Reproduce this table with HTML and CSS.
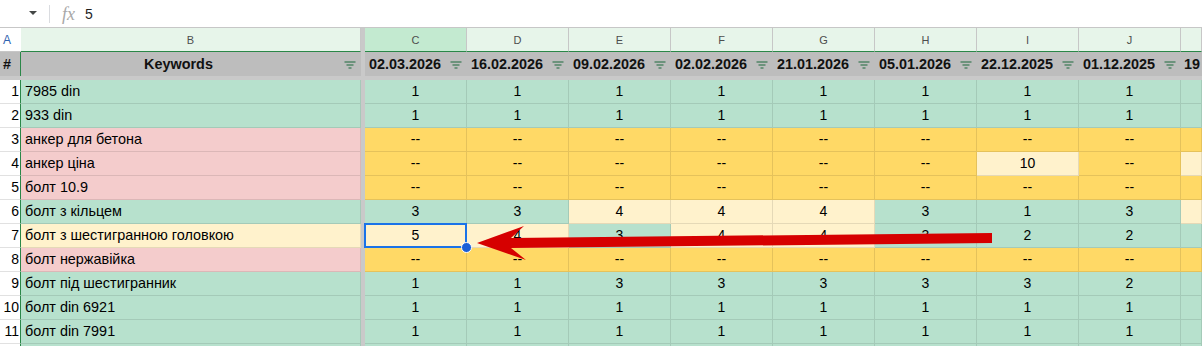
FILE: index.html
```html
<!DOCTYPE html>
<html lang="uk">
<head>
<meta charset="utf-8">
<title>Sheet</title>
<link rel="stylesheet" href="styles.css">
</head>
<body>
<div class="page">
  <div class="topbar">
    <span class="namebox-caret"></span>
    <span class="tb-sep"></span>
    <span class="fx">fx</span>
    <span class="formula">5</span>
  </div>

  <div class="row colheads">
    <div class="ch ch-a">A</div>
    <div class="ch">B</div>
    <div class="div-v"></div>
    <div class="ch ch-sel">C</div>
    <div class="ch">D</div>
    <div class="ch">E</div>
    <div class="ch">F</div>
    <div class="ch">G</div>
    <div class="ch">H</div>
    <div class="ch">I</div>
    <div class="ch">J</div>
    <div class="ch"></div>
  </div>

  <div class="row headrow">
    <div class="hd hd-a">#</div>
    <div class="hd hd-kw"><span class="hd-text">Keywords</span><svg class="filt" viewBox="0 0 12 8"><path d="M0.5 1h11M2.5 4h7M4.5 7h3"/></svg></div>
    <div class="div-v"></div>
    <div class="hd"><span class="hd-text">02.03.2026</span><svg class="filt" viewBox="0 0 12 8"><path d="M0.5 1h11M2.5 4h7M4.5 7h3"/></svg></div>
    <div class="hd"><span class="hd-text">16.02.2026</span><svg class="filt" viewBox="0 0 12 8"><path d="M0.5 1h11M2.5 4h7M4.5 7h3"/></svg></div>
    <div class="hd"><span class="hd-text">09.02.2026</span><svg class="filt" viewBox="0 0 12 8"><path d="M0.5 1h11M2.5 4h7M4.5 7h3"/></svg></div>
    <div class="hd"><span class="hd-text">02.02.2026</span><svg class="filt" viewBox="0 0 12 8"><path d="M0.5 1h11M2.5 4h7M4.5 7h3"/></svg></div>
    <div class="hd"><span class="hd-text">21.01.2026</span><svg class="filt" viewBox="0 0 12 8"><path d="M0.5 1h11M2.5 4h7M4.5 7h3"/></svg></div>
    <div class="hd"><span class="hd-text">05.01.2026</span><svg class="filt" viewBox="0 0 12 8"><path d="M0.5 1h11M2.5 4h7M4.5 7h3"/></svg></div>
    <div class="hd"><span class="hd-text">22.12.2025</span><svg class="filt" viewBox="0 0 12 8"><path d="M0.5 1h11M2.5 4h7M4.5 7h3"/></svg></div>
    <div class="hd"><span class="hd-text">01.12.2025</span><svg class="filt" viewBox="0 0 12 8"><path d="M0.5 1h11M2.5 4h7M4.5 7h3"/></svg></div>
    <div class="hd hd-k"><span class="hd-text">19</span></div>
  </div>

  <div class="div-h"></div>

  <div class="row">
    <div class="num">1</div><div class="kw g">7985 din</div><div class="div-v"></div>
    <div class="c g">1</div><div class="c g">1</div><div class="c g">1</div><div class="c g">1</div><div class="c g">1</div><div class="c g">1</div><div class="c g">1</div><div class="c g">1</div><div class="c g"></div>
  </div>
  <div class="row">
    <div class="num">2</div><div class="kw g">933 din</div><div class="div-v"></div>
    <div class="c g">1</div><div class="c g">1</div><div class="c g">1</div><div class="c g">1</div><div class="c g">1</div><div class="c g">1</div><div class="c g">1</div><div class="c g">1</div><div class="c g"></div>
  </div>
  <div class="row">
    <div class="num">3</div><div class="kw p">анкер для бетона</div><div class="div-v"></div>
    <div class="c o">--</div><div class="c o">--</div><div class="c o">--</div><div class="c o">--</div><div class="c o">--</div><div class="c o">--</div><div class="c o">--</div><div class="c o">--</div><div class="c o"></div>
  </div>
  <div class="row">
    <div class="num">4</div><div class="kw p">анкер ціна</div><div class="div-v"></div>
    <div class="c o">--</div><div class="c o">--</div><div class="c o">--</div><div class="c o">--</div><div class="c o">--</div><div class="c o">--</div><div class="c y">10</div><div class="c o">--</div><div class="c y"></div>
  </div>
  <div class="row">
    <div class="num">5</div><div class="kw p">болт 10.9</div><div class="div-v"></div>
    <div class="c o">--</div><div class="c o">--</div><div class="c o">--</div><div class="c o">--</div><div class="c o">--</div><div class="c o">--</div><div class="c o">--</div><div class="c o">--</div><div class="c o"></div>
  </div>
  <div class="row">
    <div class="num">6</div><div class="kw g">болт з кільцем</div><div class="div-v"></div>
    <div class="c g">3</div><div class="c g">3</div><div class="c y">4</div><div class="c y">4</div><div class="c y">4</div><div class="c g">3</div><div class="c g">1</div><div class="c g">3</div><div class="c y"></div>
  </div>
  <div class="row">
    <div class="num">7</div><div class="kw y">болт з шестигранною головкою</div><div class="div-v"></div>
    <div class="c y sel">5<span class="sel-box"></span><span class="sel-handle"></span></div><div class="c y">4</div><div class="c g">3</div><div class="c y">4</div><div class="c y">4</div><div class="c g">3</div><div class="c g">2</div><div class="c g">2</div><div class="c g"></div>
  </div>
  <div class="row">
    <div class="num">8</div><div class="kw p">болт нержавійка</div><div class="div-v"></div>
    <div class="c o">--</div><div class="c o">--</div><div class="c o">--</div><div class="c o">--</div><div class="c o">--</div><div class="c o">--</div><div class="c o">--</div><div class="c o">--</div><div class="c o"></div>
  </div>
  <div class="row">
    <div class="num">9</div><div class="kw g">болт під шестигранник</div><div class="div-v"></div>
    <div class="c g">1</div><div class="c g">1</div><div class="c g">3</div><div class="c g">3</div><div class="c g">3</div><div class="c g">3</div><div class="c g">3</div><div class="c g">2</div><div class="c g"></div>
  </div>
  <div class="row">
    <div class="num">10</div><div class="kw g">болт din 6921</div><div class="div-v"></div>
    <div class="c g">1</div><div class="c g">1</div><div class="c g">1</div><div class="c g">1</div><div class="c g">1</div><div class="c g">1</div><div class="c g">1</div><div class="c g">1</div><div class="c g"></div>
  </div>
  <div class="row">
    <div class="num">11</div><div class="kw g">болт din 7991</div><div class="div-v"></div>
    <div class="c g">1</div><div class="c g">1</div><div class="c g">1</div><div class="c g">1</div><div class="c g">1</div><div class="c g">1</div><div class="c g">1</div><div class="c g">1</div><div class="c g"></div>
  </div>
  <div class="row">
    <div class="num"></div><div class="kw g"></div><div class="div-v"></div>
    <div class="c g"></div><div class="c g"></div><div class="c g"></div><div class="c g"></div><div class="c g"></div><div class="c g"></div><div class="c g"></div><div class="c g"></div><div class="c g"></div>
  </div>

  <svg class="arrow" viewBox="0 0 1202 346" width="1202" height="346">
    <polygon points="477,243 524,226 511,238 992,233 992,243 511,248 526,260"/>
  </svg>
</div>
</body>
</html>
```

FILE: styles.css
```css
* { box-sizing: border-box; }

html, body {
  margin: 0;
  padding: 0;
  background: #ffffff;
}

body {
  width: 1202px;
  height: 346px;
  overflow: hidden;
  font-family: "Liberation Sans", Arial, sans-serif;
  font-size: 14px;
  color: #000;
}

.page {
  position: relative;
  width: 1202px;
  height: 346px;
  overflow: hidden;
}

/* top formula bar */
.topbar {
  height: 28px;
  border-bottom: 1px solid #c7c7c7;
  display: flex;
  align-items: center;
  padding-left: 29px;
}

.namebox-caret {
  width: 0;
  height: 0;
  border-left: 4px solid transparent;
  border-right: 4px solid transparent;
  border-top: 4px solid #444746;
  margin-top: -1px;
}

.tb-sep {
  width: 1px;
  height: 18px;
  background: #dadce0;
  margin-left: 12px;
}

.fx {
  margin-left: 12px;
  font-family: "Liberation Serif", "Times New Roman", serif;
  font-style: italic;
  font-size: 18px;
  color: #a8a8a8;
  line-height: 1;
}

.formula {
  margin-left: 10px;
  font-size: 14px;
  color: #1f1f1f;
}

/* grid rows */
.row {
  display: grid;
  grid-template-columns: 21px 340px 4px repeat(8, 102px) 21px;
  height: 24px;
}

.div-v {
  background: #c9c9c9;
}

.div-h {
  height: 4px;
  background: #c9c9c9;
}

/* column letters */
.colheads .ch {
  background: #e7f5ea;
  border-right: 1px solid #c7c7c7;
  border-bottom: 1px solid #2a8748;
  font-size: 11px;
  color: #4d4d4d;
  display: flex;
  align-items: center;
  justify-content: center;
}

.colheads .ch-a {
  background: #ffffff;
  border-right: none;
  border-bottom: 1px solid #c7c7c7;
  justify-content: flex-start;
  padding-left: 3px;
  font-size: 12px;
  color: #2f63b0;
}

.colheads .ch-sel {
  background: #c3ead0;
}

/* header row */
.headrow .hd {
  background: #bdbdbd;
  display: flex;
  align-items: center;
  padding: 0 5px 0 4px;
  font-weight: bold;
  font-size: 14.4px;
  color: #111;
  white-space: nowrap;
  overflow: hidden;
}

.headrow .hd-a {
  border-right: 1px solid #2a8748;
  padding-left: 3px;
}

.headrow .hd-k {
  padding: 0 0 0 3px;
}

.hd-text {
  flex: 1;
  overflow: hidden;
}

.hd-kw .hd-text {
  text-align: center;
  padding-right: 8px;
}

.filt {
  width: 12px;
  height: 8px;
  flex: none;
  margin-left: 4px;
  margin-top: 2px;
  fill: none;
  stroke: #1d6a3c;
  stroke-width: 1.1;
}

/* data cells */
.num {
  background: #ffffff;
  border-right: 1px solid #2a8748;
  border-bottom: 1px solid #e1e1e1;
  text-align: right;
  padding-right: 1px;
  line-height: 23px;
  font-size: 14px;
}

.kw, .c {
  border-right: 1px solid rgba(0, 0, 0, 0.1);
  border-bottom: 1px solid rgba(0, 0, 0, 0.1);
  line-height: 23px;
  white-space: nowrap;
  overflow: hidden;
}

.kw {
  padding-left: 4px;
  font-size: 14.4px;
}

.c {
  text-align: center;
}

.g { background: #b7e1cd; }
.p { background: #f4cccc; }
.o { background: #ffd966; }
.y { background: #fff2cc; }

/* selection */
.sel {
  position: relative;
  overflow: visible;
}

.sel-box {
  position: absolute;
  left: -1px;
  top: -1px;
  right: -1px;
  bottom: -1px;
  border: 2px solid #1a73e8;
  pointer-events: none;
}

.sel-handle {
  position: absolute;
  right: -6px;
  bottom: -6px;
  width: 11px;
  height: 11px;
  border-radius: 50%;
  background: #1a5fd6;
  border: 1.5px solid #ffffff;
  z-index: 2;
}

/* annotation arrow */
.arrow {
  position: absolute;
  left: 0;
  top: 0;
  pointer-events: none;
  z-index: 5;
}

.arrow polygon {
  fill: #d60000;
}
```
